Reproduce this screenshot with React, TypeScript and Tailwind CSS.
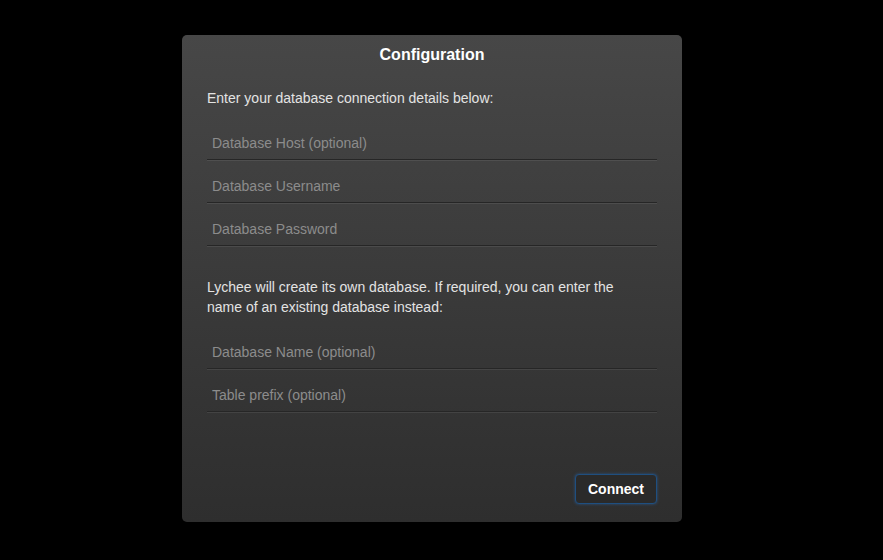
import React from 'react';

const dbFields = ['Database Host (optional)', 'Database Username', 'Database Password'];
const extraFields = ['Database Name (optional)', 'Table prefix (optional)'];

const Field = ({ placeholder, autoFocus }: { placeholder: string; autoFocus?: boolean }) => (
  <input
    type={placeholder.includes('Password') ? 'password' : 'text'}
    placeholder={placeholder}
    autoFocus={autoFocus}
    className="block w-full h-[42px] pt-2 px-[5px] bg-transparent text-[14px] text-[#e6e6e6] placeholder:text-[#8c8c8c] border-b border-[#262626] shadow-[0_1px_0_rgba(255,255,255,0.08)] outline-none caret-[#cccccc]"
  />
);

export default function App() {
  return (
    <div
      className="w-[883px] h-[560px] bg-black flex pl-[182px] pt-[35px]"
      style={{ fontFamily: '"Liberation Sans", Arial, sans-serif' }}
    >
      <div className="w-[500px] h-[487px] rounded-[5px] bg-gradient-to-b from-[#474747] to-[#2e2e2e] flex flex-col px-[25px] pt-[8px] pb-[18px]">
        <h1 className="text-center text-[16px] leading-6 font-bold text-white">Configuration</h1>

        <p className="mt-[21px] text-[14px] leading-5 text-[#e3e3e3]">Enter your database connection details below:</p>
        <div className="mt-[10px] flex flex-col gap-px">
          {dbFields.map((f, i) => (
            <Field key={f} placeholder={f} autoFocus={i === 0} />
          ))}
        </div>

        <p className="mt-[31px] text-[14px] leading-5 text-[#e3e3e3] pr-[20px]">
          Lychee will create its own database. If required, you can enter the name of an existing database instead:
        </p>
        <div className="mt-[10px] flex flex-col gap-px">
          {extraFields.map((f) => (
            <Field key={f} placeholder={f} />
          ))}
        </div>

        <div className="mt-auto flex justify-end">
          <button className="w-[82px] h-[30px] rounded-[4px] bg-[#2a2a2a] border border-[#1f4f80] shadow-[0_0_3px_rgba(40,110,190,0.6)] text-[14px] font-bold text-white">
            Connect
          </button>
        </div>
      </div>
    </div>
  );
}
